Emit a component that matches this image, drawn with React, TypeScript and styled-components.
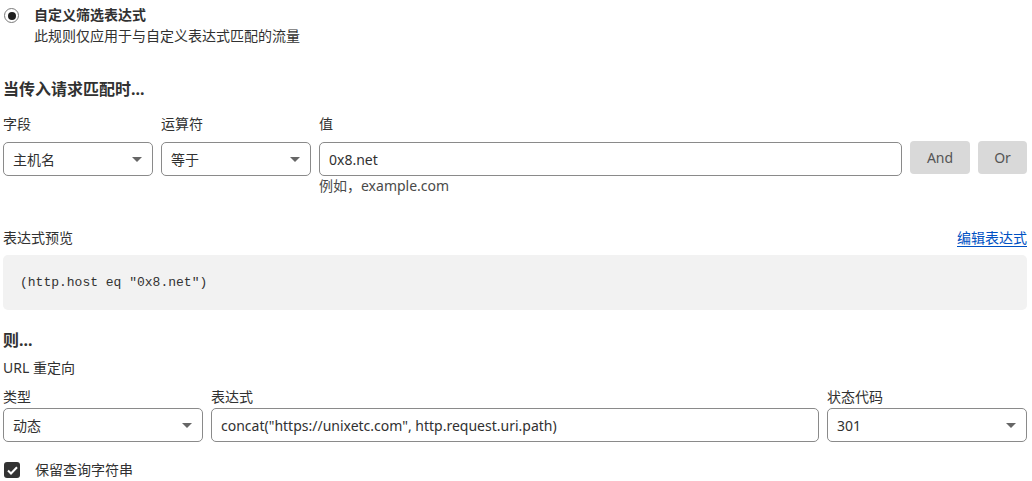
import { FunctionComponent } from 'react';
import styled, { createGlobalStyle } from 'styled-components';

const GlobalStyle = createGlobalStyle`
	body {
		margin: 0;
		background: #fff;
		color: #313131;
		font-family: 'Noto Sans', 'Noto Sans CJK SC', sans-serif;
		font-size: 14px;
	}
`;

/** Rule editor for a custom filter expression with a URL redirect action */
const App: FunctionComponent = () => {
	return (
		<Page>
			<GlobalStyle />
			<RadioRow>
				<Radio />
				<div>
					<RadioTitle>自定义筛选表达式</RadioTitle>
					<RadioDesc>此规则仅应用于与自定义表达式匹配的流量</RadioDesc>
				</div>
			</RadioRow>

			<Heading $top={31}>当传入请求匹配时...</Heading>

			<MatchRow>
				<Field>
					<Label>字段</Label>
					<Select>
						主机名
						<Caret />
					</Select>
				</Field>
				<Field>
					<Label>运算符</Label>
					<Select>
						等于
						<Caret />
					</Select>
				</Field>
				<Field>
					<Label>值</Label>
					<Input>0x8.net</Input>
					<Hint>例如，example.com</Hint>
				</Field>
				<Button $width={60}>And</Button>
				<Button $width={49}>Or</Button>
			</MatchRow>

			<PreviewHeader>
				<span>表达式预览</span>
				<EditLink href="#">编辑表达式</EditLink>
			</PreviewHeader>
			<CodeBox>(http.host eq "0x8.net")</CodeBox>

			<Heading $top={18}>则...</Heading>
			<SubHeading>URL 重定向</SubHeading>

			<ActionRow>
				<Field>
					<Label $tight>类型</Label>
					<Select>
						动态
						<Caret />
					</Select>
				</Field>
				<Field>
					<Label $tight>表达式</Label>
					<Input>concat("https://unixetc.com", http.request.uri.path)</Input>
				</Field>
				<Field>
					<Label $tight>状态代码</Label>
					<Select>
						301
						<Caret />
					</Select>
				</Field>
			</ActionRow>

			<CheckRow>
				<Checkbox>
					<svg width="11" height="9" viewBox="0 0 11 9">
						<path d="M1 4.5 L4 7.5 L10 1.2" fill="none" stroke="#fff" strokeWidth="2" />
					</svg>
				</Checkbox>
				<span>保留查询字符串</span>
			</CheckRow>
		</Page>
	);
};

const Page = styled.div`
	width: 1024px;
	padding: 5px 5px 0 3px;
`;

const RadioRow = styled.div`
	display: flex;
	gap: 15px;
	align-items: flex-start;
`;

const Radio = styled.span`
	box-sizing: border-box;
	width: 15px;
	height: 15px;
	margin: 3px 0 0 1px;
	border: 1px solid #7a7a7a;
	border-radius: 50%;
	display: flex;
	align-items: center;
	justify-content: center;
	&::after {
		content: '';
		width: 8px;
		height: 8px;
		border-radius: 50%;
		background: #1f1f1f;
	}
`;

const RadioTitle = styled.div`
	font-size: 14px;
	line-height: 20px;
	font-weight: 700;
`;

const RadioDesc = styled.div`
	font-size: 14px;
	line-height: 20px;
	margin-top: 1px;
`;

const Heading = styled.div<{ $top: number }>`
	margin-top: ${({ $top }) => $top}px;
	font-size: 16px;
	line-height: 24px;
	font-weight: 700;
`;

const SubHeading = styled.div`
	margin-top: 6px;
	font-size: 14px;
	line-height: 20px;
`;

const MatchRow = styled.div`
	margin-top: 13px;
	display: grid;
	grid-template-columns: 150px 150px 1fr 60px 49px;
	column-gap: 8px;
	align-items: start;
`;

const ActionRow = styled.div`
	margin-top: 10px;
	display: grid;
	grid-template-columns: 200px 1fr 200px;
	column-gap: 8px;
`;

const Field = styled.div`
	display: flex;
	flex-direction: column;
`;

const Label = styled.div<{ $tight?: boolean }>`
	font-size: 14px;
	line-height: ${({ $tight }) => ($tight ? '18px' : '20px')};
	margin-bottom: ${({ $tight }) => ($tight ? '2px' : '8px')};
`;

const Control = styled.div`
	box-sizing: border-box;
	height: 34px;
	border: 1px solid #8a8a8a;
	border-radius: 5px;
	padding: 0 9px;
	display: flex;
	align-items: center;
	font-size: 14px;
	color: #313131;
	background: #fff;
	white-space: nowrap;
	overflow: hidden;
`;

const Select = styled(Control)`
	justify-content: space-between;
	padding-right: 10px;
`;

const Input = styled(Control)``;

const Caret = styled.span`
	width: 0;
	height: 0;
	border-left: 5px solid transparent;
	border-right: 5px solid transparent;
	border-top: 5px solid #666;
`;

const Hint = styled.div`
	margin-top: 1px;
	font-size: 14px;
	line-height: 18px;
	color: #4a4a4a;
`;

const Button = styled.button<{ $width: number }>`
	margin-top: 27px;
	width: ${({ $width }) => $width}px;
	height: 33px;
	border: none;
	border-radius: 4px;
	background: #d9d9d9;
	color: #555;
	font-family: 'Noto Sans', sans-serif;
	font-size: 14px;
	padding: 0;
`;

const PreviewHeader = styled.div`
	margin-top: 33px;
	display: flex;
	justify-content: space-between;
	font-size: 14px;
	line-height: 20px;
`;

const EditLink = styled.a`
	color: #0051c3;
	text-decoration: underline;
	text-underline-offset: 3px;
`;

const CodeBox = styled.div`
	margin-top: 7px;
	height: 55px;
	box-sizing: border-box;
	padding: 0 17px;
	display: flex;
	align-items: center;
	background: #f2f2f2;
	border-radius: 5px;
	font-family: 'Liberation Mono', 'DejaVu Sans Mono', monospace;
	font-size: 13px;
	color: #333;
`;

const CheckRow = styled.div`
	margin-top: 20px;
	display: flex;
	align-items: center;
	gap: 15px;
	font-size: 14px;
	line-height: 16px;
`;

const Checkbox = styled.span`
	width: 16px;
	height: 16px;
	margin-left: 1px;
	border-radius: 3px;
	background: #333;
	display: flex;
	align-items: center;
	justify-content: center;
`;

export default App;
